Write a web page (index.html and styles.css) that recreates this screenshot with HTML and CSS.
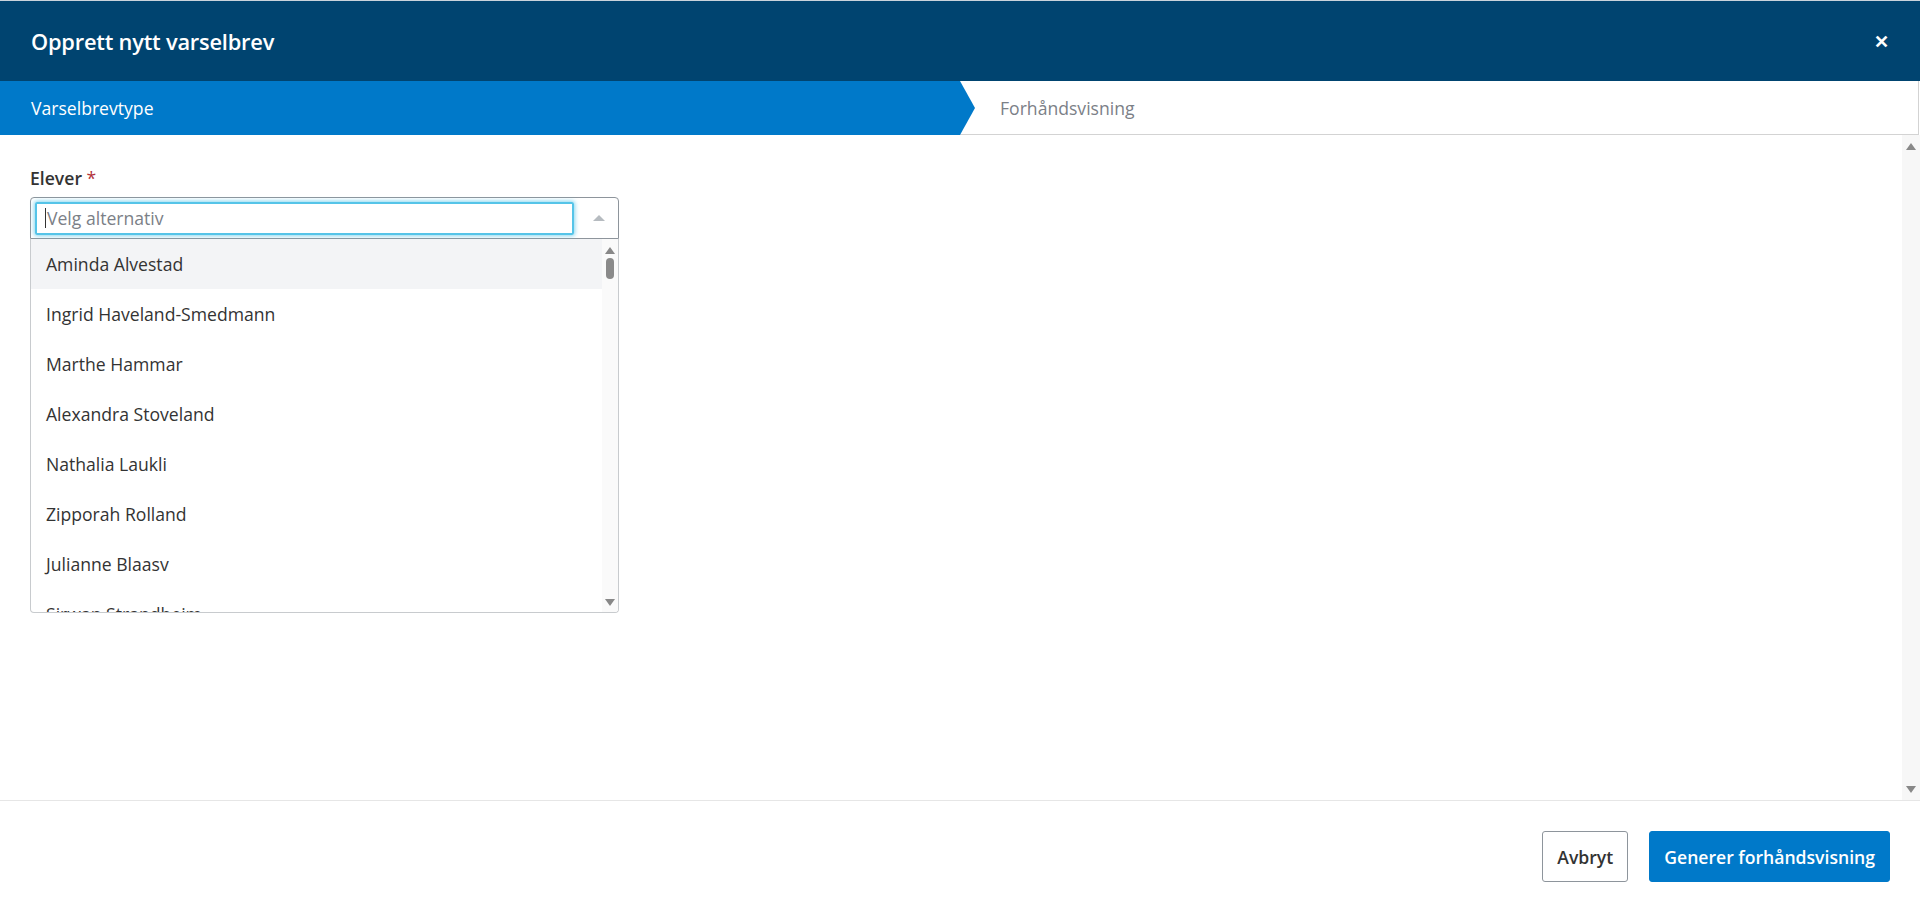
FILE: index.html
```html
<!DOCTYPE html>
<html lang="no">
<head>
  <meta charset="UTF-8" />
  <meta name="viewport" content="width=device-width, initial-scale=1.0"/>
  <title>Opprett nytt varselbrev</title>
  <link rel="stylesheet" href="styles.css">
</head>
<body>

<div class="modal">
  <!-- Tittel -->
  <div class="modal-header">
    <h1>Opprett nytt varselbrev</h1>
    <span class="close">&#x2715;</span>
  </div>

  <!-- Steg -->
  <div class="steps">
    <div class="step active">Varselbrevtype</div>
    <div class="step">Forhåndsvisning</div>
  </div>

  <!-- Innhold -->
  <div class="modal-body">
    <div class="content">
      <label class="field-label">Elever <span class="req">*</span></label>
      <div class="select">
        <div class="select-top">
          <div class="search"><span class="caret"></span>Velg alternativ</div>
          <span class="arrow-up small"></span>
        </div>
        <div class="options">
          <ul class="option-list">
            <li class="hover">Aminda Alvestad</li>
            <li>Ingrid Haveland-Smedmann</li>
            <li>Marthe Hammar</li>
            <li>Alexandra Stoveland</li>
            <li>Nathalia Laukli</li>
            <li>Zipporah Rolland</li>
            <li>Julianne Blaasv</li>
            <li>Sirwan Strandheim</li>
          </ul>
          <div class="list-scroll">
            <span class="arrow-up"></span>
            <span class="thumb"></span>
            <span class="spacer"></span>
            <span class="arrow-down"></span>
          </div>
        </div>
      </div>
    </div>
    <div class="body-scroll">
      <span class="arrow-up"></span>
      <span class="spacer"></span>
      <span class="arrow-down"></span>
    </div>
  </div>

  <!-- Knapper -->
  <div class="modal-footer">
    <button class="btn btn-default">Avbryt</button>
    <button class="btn btn-primary">Generer forhåndsvisning</button>
  </div>
</div>

</body>
</html>
```

FILE: styles.css
```css
* {
  box-sizing: border-box;
}
body {
  margin: 0;
  font-family: "Open Sans", Arial, sans-serif;
  color: #333;
  background-color: #fff;
}
.modal {
  height: 912px;
  display: flex;
  flex-direction: column;
}
.modal-header {
  height: 81px;
  background-color: #004470;
  border-top: 1px solid #c9d3dc;
  display: flex;
  align-items: center;
  justify-content: space-between;
  padding: 0 31px 0 31px;
}
.modal-header h1 {
  margin: 0;
  font-size: 21.8px;
  font-weight: 600;
  color: #fff;
  letter-spacing: -0.2px;
}
.close {
  color: #fff;
  font-size: 18px;
  font-weight: bold;
}
.steps {
  height: 54px;
  display: flex;
}
.step {
  display: flex;
  align-items: center;
  font-size: 17.6px;
}
.step.active {
  position: relative;
  z-index: 1;
  width: 975px;
  margin-right: -15px;
  padding-left: 31px;
  background-color: #0079c9;
  color: #fff;
  clip-path: polygon(0 0, calc(100% - 15px) 0, 100% 50%, calc(100% - 15px) 100%, 0 100%);
}
.step:not(.active) {
  flex: 1;
  padding-left: 40px;
  color: #7b8087;
  border-bottom: 1px solid #d3d3d3;
  border-right: 1px solid #d3d3d3;
  margin-right: 1px;
}
.modal-body {
  flex: 1;
  display: flex;
}
.content {
  flex: 1;
  padding: 31px 29px 0 30px;
}
.field-label {
  display: block;
  font-size: 17.6px;
  font-weight: 600;
  line-height: 24px;
  margin-bottom: 7px;
  color: #333;
}
.req {
  color: #b2313a;
  font-weight: 400;
}
.select {
  width: 589px;
}
.select-top {
  height: 42px;
  border: 1px solid #8e959c;
  border-radius: 4px 4px 0 0;
  display: flex;
  align-items: center;
  padding: 0 4px;
}
.search {
  width: 539px;
  height: 33px;
  border: 2px solid #55c4e8;
  border-radius: 2px;
  box-shadow: 0 0 4px 1px rgba(85, 196, 232, 0.7);
  display: flex;
  align-items: center;
  padding-left: 8px;
  font-size: 17.6px;
  color: #7b8087;
}
.caret {
  width: 1px;
  height: 20px;
  background-color: #333;
  margin-right: 1px;
}
.arrow-up, .arrow-down {
  width: 0;
  height: 0;
  border-left: 5px solid transparent;
  border-right: 5px solid transparent;
}
.arrow-up {
  border-bottom: 7px solid #888;
}
.arrow-down {
  border-top: 7px solid #888;
}
.arrow-up.small {
  margin-left: 19px;
  border-left-width: 6px;
  border-right-width: 6px;
  border-bottom: 6px solid #b6bbc0;
}
.options {
  height: 374px;
  border: 1px solid #c8cbce;
  border-top: none;
  border-radius: 0 0 4px 4px;
  display: flex;
  overflow: hidden;
}
.option-list {
  flex: 1;
  margin: 0;
  padding: 0;
  list-style: none;
}
.option-list li {
  height: 50px;
  line-height: 51px;
  padding-left: 15px;
  font-size: 17.6px;
  color: #333;
}
.option-list li.hover {
  background-color: #f3f4f6;
}
.list-scroll {
  width: 16px;
  background-color: #fafafa;
  display: flex;
  flex-direction: column;
  align-items: center;
  padding: 8px 0 6px;
}
.thumb {
  width: 8px;
  height: 21px;
  margin-top: 4px;
  border-radius: 4px;
  background-color: #8a8a8a;
}
.spacer {
  flex: 1;
}
.body-scroll {
  width: 18px;
  background-color: #f7f7f7;
  display: flex;
  flex-direction: column;
  align-items: center;
  padding: 8px 0 7px;
}
.modal-footer {
  height: 112px;
  border-top: 1px solid #e6e6e6;
  display: flex;
  justify-content: flex-end;
  align-items: flex-start;
  gap: 21px;
  padding: 30px 30px 0;
}
.btn {
  height: 51px;
  padding: 0 14px;
  font-family: "Open Sans", Arial, sans-serif;
  font-size: 17.6px;
  font-weight: 600;
  border-radius: 3px;
  cursor: pointer;
}
.btn-default {
  background-color: #fff;
  color: #333;
  border: 1px solid #8e959c;
}
.btn-primary {
  background-color: #0079c9;
  color: #fff;
  border: 1px solid #0079c9;
}
```
